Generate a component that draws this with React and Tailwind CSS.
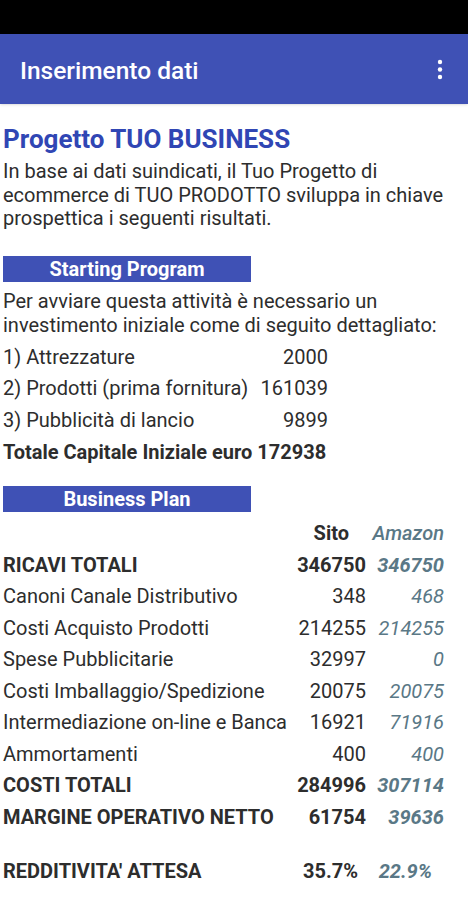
import React from "react";

const rows = [
  { label: "RICAVI TOTALI", sito: "346750", amazon: "346750", bold: true },
  { label: "Canoni Canale Distributivo", sito: "348", amazon: "468" },
  { label: "Costi Acquisto Prodotti", sito: "214255", amazon: "214255" },
  { label: "Spese Pubblicitarie", sito: "32997", amazon: "0" },
  { label: "Costi Imballaggio/Spedizione", sito: "20075", amazon: "20075" },
  { label: "Intermediazione on-line e Banca", sito: "16921", amazon: "71916" },
  { label: "Ammortamenti", sito: "400", amazon: "400" },
  { label: "COSTI TOTALI", sito: "284996", amazon: "307114", bold: true },
  { label: "MARGINE OPERATIVO NETTO", sito: "61754", amazon: "39636", bold: true },
];

const startItems = [
  { label: "1) Attrezzature", value: "2000" },
  { label: "2) Prodotti (prima fornitura)", value: "161039" },
  { label: "3) Pubblicità di lancio", value: "9899" },
];

function SectionBar({ children }) {
  return (
    <div className="w-[248px] h-[26px] bg-[#3f51b5] text-white font-bold text-[20px] leading-[27px] text-center">
      {children}
    </div>
  );
}

export default function App() {
  return (
    <div className="w-[468px] h-[900px] bg-white overflow-hidden font-['Roboto',sans-serif] text-[#2d2d2d]">
      {/* status bar */}
      <div className="h-[34px] bg-black" />

      {/* app bar */}
      <div className="h-[70px] bg-[#3f51b5] flex items-center justify-between pl-[20px] pr-[16px] shadow">
        <span className="mt-[5px] text-white text-[24.5px] font-medium">Inserimento dati</span>
        <svg width="24" height="24" viewBox="0 0 24 24" fill="white">
          <circle cx="12" cy="5" r="2.2" />
          <circle cx="12" cy="12.5" r="2.2" />
          <circle cx="12" cy="20" r="2.2" />
        </svg>
      </div>

      <div className="px-[3px]">
        <h1 className="mt-[21px] text-[26px] leading-[28px] font-bold text-[#3046b4]">Progetto TUO BUSINESS</h1>
        <p className="mt-[7px] text-[20px] leading-[23.5px]">
          In base ai dati suindicati, il Tuo Progetto di ecommerce di TUO PRODOTTO sviluppa in chiave prospettica i seguenti risultati.
        </p>

        <div className="mt-[25px]">
          <SectionBar>Starting Program</SectionBar>
        </div>
        <p className="mt-[7px] text-[20px] leading-[24px]">
          Per avviare questa attività è necessario un investimento iniziale come di seguito dettagliato:
        </p>

        <div className="mt-[5px] w-[325px]">
          {startItems.map((it) => (
            <div key={it.label} className="flex justify-between text-[20px] leading-[31.7px]">
              <span>{it.label}</span>
              <span>{it.value}</span>
            </div>
          ))}
          <div className="text-[20px] leading-[31.7px] font-bold whitespace-nowrap">Totale Capitale Iniziale euro 172938</div>
        </div>

        <div className="mt-[18px]">
          <SectionBar>Business Plan</SectionBar>
        </div>

        <div className="mt-[6px] pr-[21px] text-[20px] leading-[31.5px]">
          <div className="flex">
            <span className="flex-1" />
            <span className="font-bold text-right pr-[17px]">Sito</span>
            <span className="w-[78px] text-right italic font-medium text-[#5a7886]">Amazon</span>
          </div>
          {rows.map((r) => (
            <div key={r.label} className={`flex ${r.bold ? "font-bold" : ""}`}>
              <span className="flex-1 whitespace-nowrap">{r.label}</span>
              <span className="text-right">{r.sito}</span>
              <span className="w-[78px] text-right italic text-[#5a7886]">{r.amazon}</span>
            </div>
          ))}
          <div className="flex font-bold mt-[23px]">
            <span className="flex-1">REDDITIVITA' ATTESA</span>
            <span className="text-right pr-[8px]">35.7%</span>
            <span className="w-[78px] text-right pr-[12px] italic text-[#5a7886]">22.9%</span>
          </div>
        </div>
      </div>
    </div>
  );
}
